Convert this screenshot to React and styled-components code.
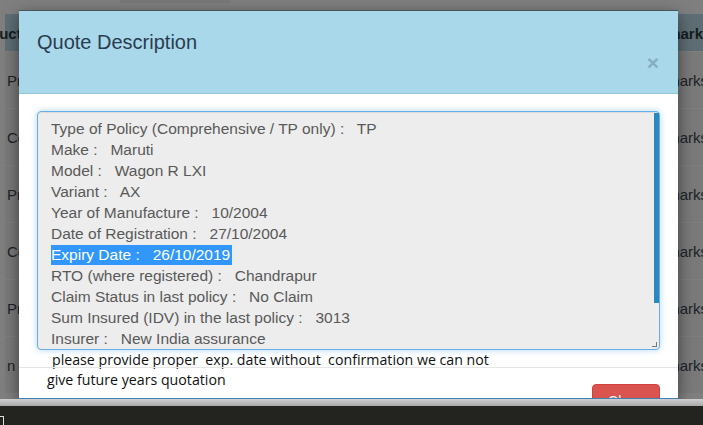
import styled, { createGlobalStyle } from "styled-components";

const GlobalStyle = createGlobalStyle`
  html, body {
    margin: 0;
    padding: 0;
    overflow: hidden;
  }
  body {
    font-family: "Liberation Sans", Arial, sans-serif;
  }
`;

const Screen = styled.div`
  width: 703px;
  height: 425px;
  display: flex;
  flex-direction: column;
  overflow: hidden;
`;

const PageArea = styled.div`
  position: relative;
  height: 399px;
  flex-shrink: 0;
  overflow: hidden;
  background: #fff;
`;

const TopBar = styled.div`
  height: 14px;
  padding-left: 120px;
  background: #fff;
`;

const SearchBox = styled.div`
  width: 110px;
  height: 3px;
  background: #f0f0f0;
`;

const Table = styled.div`
  display: flex;
  flex-direction: column;
  border-left: 1px solid #fff;
  margin-left: 4px;
`;

const Row = styled.div`
  display: flex;
  align-items: center;
  height: ${(p) => (p.head ? "36px" : "56px")};
  background: ${(p) => (p.head ? "#bcdde9" : "#f4f4f4")};
  border-top: 1px solid ${(p) => (p.head ? "#bcdde9" : "#ffffff")};
  font-size: 15px;
  font-weight: ${(p) => (p.head ? "bold" : "normal")};
  color: ${(p) => (p.head ? "#2b3b44" : "#3c4650")};
`;

const LeadCell = styled.div`
  width: 120px;
  padding-left: 2px;
  white-space: nowrap;
  text-indent: ${(p) => (p.head ? "-42px" : "0")};
`;

const Spacer = styled.div`
  flex: 1;
`;

const TailCell = styled.div`
  width: 55px;
  white-space: nowrap;
`;

const Backdrop = styled.div`
  position: absolute;
  inset: 0;
  background: rgba(0, 0, 0, 0.5);
`;

const Modal = styled.div`
  position: absolute;
  left: 19px;
  top: 10px;
  width: 659px;
  height: 389px;
  background: #fff;
  border-top: 1px solid #48565d;
  border-bottom: 1px solid #3f82b5;
  box-shadow: 0 5px 15px rgba(0, 0, 0, 0.5);
  display: flex;
  flex-direction: column;
  overflow: hidden;
  box-sizing: border-box;
`;

const Header = styled.div`
  flex-shrink: 0;
  height: 83px;
  box-sizing: border-box;
  display: flex;
  justify-content: space-between;
  align-items: flex-start;
  padding: 20px 19px 0 18px;
  background: #a9d8eb;
  border-bottom: 1px solid #92c6d9;
`;

const Title = styled.h4`
  margin: 0;
  font-size: 20px;
  line-height: 22px;
  font-weight: normal;
  color: #2a3d4e;
`;

const CloseX = styled.span`
  margin-top: 21px;
  font-size: 21px;
  line-height: 21px;
  font-weight: bold;
  color: #84aebf;
`;

const Body = styled.div`
  flex-shrink: 0;
  padding: 17px 18px 0 18px;
`;

const TextWrap = styled.div`
  position: relative;
`;

const TextBox = styled.div`
  height: 239px;
  box-sizing: border-box;
  padding: 6px 0 0 13px;
  background: #ededed;
  border: 1px solid #66afe9;
  border-radius: 4px;
  box-shadow: inset 0 1px 1px rgba(0, 0, 0, 0.075), 0 0 6px rgba(102, 175, 233, 0.5);
  font-size: 15.5px;
  line-height: 21px;
  color: #595959;
  white-space: pre;
  overflow: hidden;
`;

const Thumb = styled.div`
  position: absolute;
  right: 1px;
  top: 2px;
  width: 5px;
  height: 190px;
  background: #2a88be;
`;

const Grip = styled.div`
  position: absolute;
  right: 3px;
  bottom: 3px;
  width: 4px;
  height: 4px;
  border-right: 1px solid #777;
  border-bottom: 1px solid #777;
`;

const Line = styled.div`
  height: 21px;
`;

const Selected = styled.span`
  display: inline-block;
  line-height: 20px;
  padding-right: 2px;
  background: #3297fd;
  color: #fff;
`;

const Note = styled.div`
  font-family: "Open Sans", "Noto Sans", sans-serif;
  font-size: 14.2px;
  color: #111;
  white-space: pre;
  line-height: 14px;
  padding-left: ${(p) => p.indent}px;
  padding-top: ${(p) => p.top}px;
`;

const Footer = styled.div`
  flex: 1;
  display: flex;
  justify-content: space-between;
  align-items: flex-start;
  padding: 0 18px 0 0;
  border-top: 1px solid #e5e5e5;
`;

const Button = styled.button`
  flex-shrink: 0;
  margin-top: 16px;
  width: 68px;
  height: 34px;
  border: 1px solid #d43f3a;
  border-radius: 4px;
  background: #d9534f;
  color: #fff;
  font-family: "Liberation Sans", Arial, sans-serif;
  font-size: 14px;
`;

const Strip = styled.div`
  height: 7px;
  flex-shrink: 0;
  background: linear-gradient(#cfcfcf, #a9a9a9);
`;

const Taskbar = styled.div`
  flex: 1;
  background: #23231f;
  display: flex;
  align-items: flex-end;
`;

const TaskIcon = styled.div`
  width: 3px;
  height: 8px;
  border: 1px solid #ddd;
  border-left: none;
  border-bottom: none;
`;

const lines = [
  "Type of Policy (Comprehensive / TP only) :   TP",
  "Make :   Maruti",
  "Model :   Wagon R LXI",
  "Variant :   AX",
  "Year of Manufacture :   10/2004",
  "Date of Registration :   27/10/2004",
  null,
  "RTO (where registered) :   Chandrapur",
  "Claim Status in last policy :   No Claim",
  "Sum Insured (IDV) in the last policy :   3013",
  "Insurer :   New India assurance",
  "NCB :   0%",
  "Fuel Type :   Petrol",
];

const rows = ["Pr", "Co", "Pr", "Co", "Pr", "n"];
const rowNames = { Pr: "Private Car", Co: "Commercial", n: "n" };

const App = () => {
  return (
    <Screen>
      <GlobalStyle />
      <PageArea>
        <TopBar>
          <SearchBox />
        </TopBar>
        <Table>
          <Row head>
            <LeadCell head>Product</LeadCell>
            <Spacer />
            <TailCell>Remarks</TailCell>
          </Row>
          {rows.map((r, i) => (
            <Row key={i}>
              <LeadCell>{rowNames[r]}</LeadCell>
              <Spacer />
              <TailCell>Remarks</TailCell>
            </Row>
          ))}
        </Table>
        <Backdrop />
        <Modal>
          <Header>
            <Title>Quote Description</Title>
            <CloseX>×</CloseX>
          </Header>
          <Body>
            <TextWrap>
              <TextBox>
                {lines.map((l, i) =>
                  l === null ? (
                    <Line key={i}>
                      <Selected>Expiry Date :   26/10/2019</Selected>
                    </Line>
                  ) : (
                    <Line key={i}>{l}</Line>
                  )
                )}
              </TextBox>
              <Thumb />
              <Grip />
            </TextWrap>
            <Note indent={15} top={3}>please provide proper  exp. date without  confirmation we can not</Note>
          </Body>
          <Footer>
            <Note indent={28} top={5}>give future years quotation</Note>
            <Button>Close</Button>
          </Footer>
        </Modal>
      </PageArea>
      <Strip />
      <Taskbar>
        <TaskIcon />
      </Taskbar>
    </Screen>
  );
};

export default App;
